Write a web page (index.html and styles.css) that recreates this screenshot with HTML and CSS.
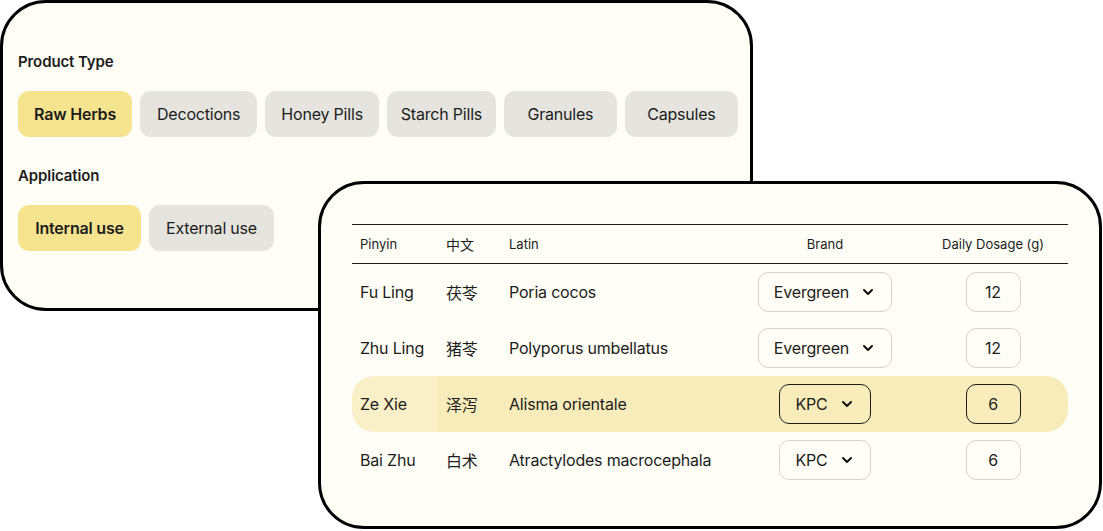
FILE: index.html
```html
<!DOCTYPE html>
<html lang="en">
<head>
    <meta charset="UTF-8">
    <title>Herb Order</title>
    <link rel="stylesheet" href="styles.css">
</head>
<body>
    <div class="stage">
        <!-- Filters card -->
        <div class="card filters">
            <h3 class="group-title">Product Type</h3>
            <div class="chips">
                <span class="chip active">Raw Herbs</span>
                <span class="chip">Decoctions</span>
                <span class="chip">Honey Pills</span>
                <span class="chip">Starch Pills</span>
                <span class="chip">Granules</span>
                <span class="chip">Capsules</span>
            </div>
            <h3 class="group-title second">Application</h3>
            <div class="chips wide">
                <span class="chip active">Internal use</span>
                <span class="chip">External use</span>
            </div>
        </div>

        <!-- Formula table card -->
        <div class="card formula">
            <table class="herbs">
                <colgroup>
                    <col class="c-pinyin">
                    <col class="c-cn">
                    <col class="c-latin">
                    <col class="c-brand">
                    <col class="c-dose">
                </colgroup>
                <thead>
                    <tr>
                        <th>Pinyin</th>
                        <th class="cjk">中文</th>
                        <th>Latin</th>
                        <th class="center">Brand</th>
                        <th class="center">Daily Dosage (g)</th>
                    </tr>
                </thead>
                <tbody>
                    <tr>
                        <td>Fu Ling</td>
                        <td class="cjk">茯苓</td>
                        <td>Poria cocos</td>
                        <td class="center"><span class="select">Evergreen <svg width="12" height="8" viewBox="0 0 12 8"><path d="M2 2l4 4 4-4" fill="none" stroke="#111" stroke-width="2" stroke-linecap="round" stroke-linejoin="round"/></svg></span></td>
                        <td class="center"><span class="qty">12</span></td>
                    </tr>
                    <tr>
                        <td>Zhu Ling</td>
                        <td class="cjk">猪苓</td>
                        <td>Polyporus umbellatus</td>
                        <td class="center"><span class="select">Evergreen <svg width="12" height="8" viewBox="0 0 12 8"><path d="M2 2l4 4 4-4" fill="none" stroke="#111" stroke-width="2" stroke-linecap="round" stroke-linejoin="round"/></svg></span></td>
                        <td class="center"><span class="qty">12</span></td>
                    </tr>
                    <tr class="selected">
                        <td>Ze Xie</td>
                        <td class="cjk">泽泻</td>
                        <td>Alisma orientale</td>
                        <td class="center"><span class="select">KPC <svg width="12" height="8" viewBox="0 0 12 8"><path d="M2 2l4 4 4-4" fill="none" stroke="#111" stroke-width="2" stroke-linecap="round" stroke-linejoin="round"/></svg></span></td>
                        <td class="center"><span class="qty">6</span></td>
                    </tr>
                    <tr>
                        <td>Bai Zhu</td>
                        <td class="cjk">白术</td>
                        <td>Atractylodes macrocephala</td>
                        <td class="center"><span class="select">KPC <svg width="12" height="8" viewBox="0 0 12 8"><path d="M2 2l4 4 4-4" fill="none" stroke="#111" stroke-width="2" stroke-linecap="round" stroke-linejoin="round"/></svg></span></td>
                        <td class="center"><span class="qty">6</span></td>
                    </tr>
                </tbody>
            </table>
        </div>
    </div>
</body>
</html>
```

FILE: styles.css
```css
body {
    margin: 0;
    background: #ffffff;
    font-family: Inter, "Noto Sans", sans-serif;
    color: #1c1c1c;
}

.stage {
    position: relative;
    width: 1103px;
    height: 531px;
    overflow: hidden;
}

.card {
    box-sizing: border-box;
    background: #fefef6;
    border: 3px solid #000;
    border-radius: 46px;
}

.filters {
    width: 753px;
    height: 311px;
    padding: 48px 15px 0;
}

/* the table card floats over the filters card */
.formula {
    position: absolute;
    left: 318px;
    top: 181px;
    width: 784px;
    height: 348px;
    padding: 40px 29px 0 31px;
}

.group-title {
    margin: 0 0 18px;
    font-size: 15px;
    line-height: 22px;
    font-weight: 600;
    letter-spacing: -0.1px;
}

.group-title.second {
    margin-top: 28px;
    margin-bottom: 18px;
}

.chips {
    display: flex;
    gap: 8px;
}

.chip {
    display: flex;
    flex-shrink: 0;
    align-items: center;
    justify-content: center;
    box-sizing: border-box;
    min-width: 113px;
    height: 46px;
    padding: 0 16px;
    border-radius: 11px;
    background: #e5e4df;
    font-size: 16px;
    letter-spacing: -0.2px;
    white-space: nowrap;
}

.chips .chip:nth-child(2) {
    padding: 0 17px;
}

.chips .chip:nth-child(4) {
    min-width: 109px;
    padding: 0 13px;
}

.chips.wide .chip {
    min-width: 123px;
}

.chip.active {
    background: #f6e38e;
    font-weight: 600;
}

.herbs {
    width: 716px;
    border-collapse: separate;
    border-spacing: 0;
    table-layout: fixed;
}

.c-pinyin { width: 86px; }
.c-cn { width: 62px; }
.c-latin { width: 232px; }
.c-brand { width: 186px; }
.c-dose { width: 150px; }

.herbs th {
    height: 38px;
    padding: 0 0 0 8px;
    font-size: 13px;
    font-weight: 400;
    text-align: left;
    border-top: 1px solid #1c1c1c;
    border-bottom: 1px solid #1c1c1c;
}

.herbs td {
    height: 56px;
    padding: 0 0 0 8px;
    font-size: 16px;
    letter-spacing: -0.2px;
}

.herbs th:nth-child(3), .herbs td:nth-child(3) { padding-left: 9px; }

.herbs .center {
    text-align: center;
    padding-left: 0;
}

.cjk {
    font-family: "Noto Sans CJK SC", sans-serif;
}

.herbs th.cjk {
    font-size: 14px;
}

.selected td {
    background: #f8ecbb;
}

.selected td:first-child {
    background: #faf0c7;
    border-radius: 22px 0 0 22px;
}

.selected td:last-child {
    border-radius: 0 22px 22px 0;
}

.select {
    display: inline-flex;
    align-items: center;
    gap: 13px;
    box-sizing: border-box;
    height: 40px;
    padding: 0 17px 0 15px;
    border: 1px solid #d3d2cc;
    border-radius: 10px;
    vertical-align: middle;
}

.qty {
    display: inline-flex;
    align-items: center;
    justify-content: center;
    box-sizing: border-box;
    width: 55px;
    height: 40px;
    border: 1px solid #d3d2cc;
    border-radius: 10px;
    vertical-align: middle;
}

.selected .select,
.selected .qty {
    border-color: #1c1c1c;
}
```
